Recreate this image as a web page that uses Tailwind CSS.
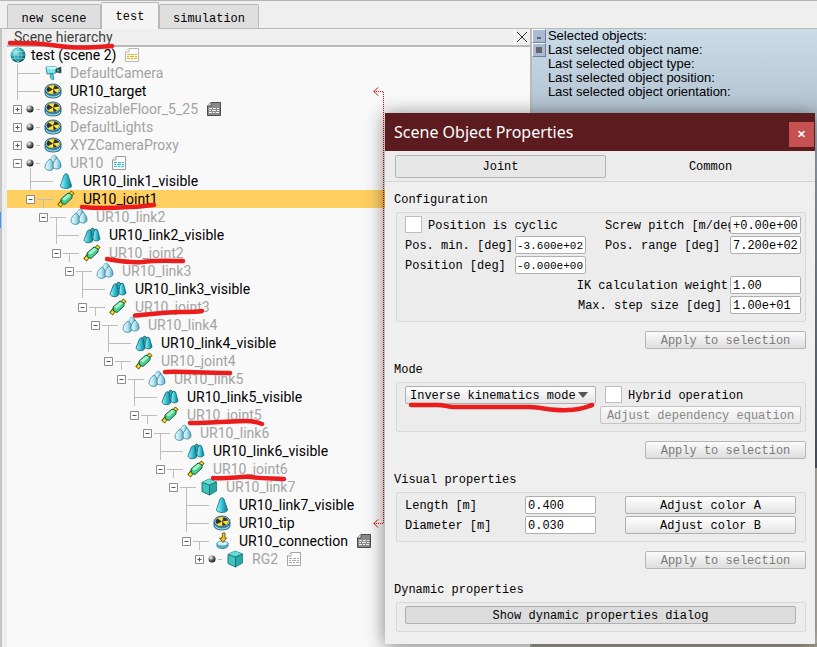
<!DOCTYPE html>
<html lang="en">
<head>
<meta charset="utf-8">
<title>Scene editor</title>
<script src="https://cdn.jsdelivr.net/npm/@tailwindcss/browser@4"></script>
</head>
<body class="bg-[#efefef] font-['Roboto','Liberation_Sans',sans-serif] text-sm text-black">
<svg class="absolute h-0 w-0" aria-hidden="true">
  <defs>
    <linearGradient id="teal" x1="0" x2="1"><stop offset="0" stop-color="#b8f4fa"/><stop offset=".4" stop-color="#43cfe0"/><stop offset="1" stop-color="#087c90"/></linearGradient>
    <linearGradient id="pale" x1="0" x2="1"><stop offset="0" stop-color="#e9fbff"/><stop offset=".5" stop-color="#b5e4f2"/><stop offset="1" stop-color="#4f9db4"/></linearGradient>
    <radialGradient id="ball" cx=".35" cy=".3" r=".8"><stop offset="0" stop-color="#c4f6f6"/><stop offset=".45" stop-color="#2b9cab"/><stop offset="1" stop-color="#084855"/></radialGradient>
    <radialGradient id="bead" cx=".35" cy=".3" r=".7"><stop offset="0" stop-color="#fff"/><stop offset=".5" stop-color="#777"/><stop offset="1" stop-color="#111"/></radialGradient>
    <symbol id="globe" viewBox="0 0 18 18"><circle cx="9" cy="9" r="7.500" fill="url(#ball)"/><path d="M2 9H16M3 5.500H15M3 12.500H15M9 2V16M9 2C4 6 4 12 9 16M9 2C14 6 14 12 9 16" fill="none" stroke="#8ce4e8" stroke-width=".6"/></symbol>
    <symbol id="camera" viewBox="0 0 18 18"><path d="M2 3L12 2.500V9L3 10Z" fill="#7fe6ee" stroke="#1d7d88" stroke-width=".8"/><path d="M2 3L4 5H13L12 2.500Z" fill="#c8fafa"/><path d="M12 5L17 3V9L12 8Z" fill="#2c555c" stroke="#163c42" stroke-width=".6"/><path d="M14 5.500V7.500" stroke="#9ff"/><path d="M6 10H9L10 15L8.500 16L6.500 14Z" fill="#5bd0da" stroke="#1d7d88" stroke-width=".7"/></symbol>
    <symbol id="dummy" viewBox="0 0 18 18"><path d="M1 8V11.500C1 17.500 17 17.500 17 11.500V8Z" fill="#3d9bbf" stroke="#184e66" stroke-width=".8"/><path d="M2 12C4 16 14 16 16 12" fill="none" stroke="#a3e1f3"/><ellipse cx="9" cy="7.500" rx="8" ry="5.500" fill="#7fb4c6" stroke="#264b5b" stroke-width=".8"/><ellipse cx="9" cy="7.500" rx="6.300" ry="4.200" fill="#33332a"/><path d="M9 7.500L4.500 4.500C6 3.300 8 3 10.500 3.300ZM9 7.500L15.300 6.500C15.400 8.500 14.500 10 13 10.700ZM9 7.500L9.500 11.700C7 12 5 11.300 3.800 10.200Z" fill="#ffe32e"/></symbol>
    <symbol id="pair" viewBox="0 0 18 18"><path d="M7 6C7 2 10 0 12 2C14 4 13 6 13 9H8Z" fill="url(#pale)" stroke="#5b9fb1" stroke-width=".8"/><path d="M6 5C9 7 10 10 10 13C10 17.500 1 17.500 1 13C1 10 3 7 6 5Z" fill="url(#pale)" stroke="#3c8498" stroke-width=".8"/><path d="M13 4C16 7 17 9 17 12C17 16 9 16 9 12C9 9 10 7 13 4Z" fill="url(#pale)" stroke="#3c8498" stroke-width=".8"/></symbol>
    <symbol id="cones" viewBox="0 0 18 18"><path d="M8 3L10 2L12 4V9H7Z" fill="#36a6b3" stroke="#0a5f70" stroke-width=".8"/><path d="M6 3.500L8 5L10 14C9 17.500 2 17.500 1 14L4.500 5Z" fill="url(#teal)" stroke="#0a5f70" stroke-width=".8"/><path d="M12.500 3L14.500 4L17 13C16 15.500 11 15.500 10 13L10.500 6Z" fill="url(#teal)" stroke="#0a5f70" stroke-width=".8"/></symbol>
    <symbol id="cone" viewBox="0 0 18 18"><path d="M9 1.500L11 3C12 7 14 11 14.500 14C14 17.300 4 17.300 3.500 14C4 11 6 7 7 3Z" fill="url(#teal)" stroke="#126a7c" stroke-width=".8"/></symbol>
    <symbol id="joint" viewBox="0 0 18 18"><path d="M2 16L6 11M12 6L16 2" stroke="#5f5200" stroke-width="4.500"/><path d="M2.500 15.500L6 11.500M12 6L15.500 2.500" stroke="#f6d81f" stroke-width="2.800"/><path d="M4 9L11 3L15 5V8L8 14.500L4.500 13Z" fill="#49cf93" stroke="#165b3c"/><path d="M5 9L11 4L14 5L8 10.500Z" fill="#a4f5c5"/></symbol>
    <symbol id="cube" viewBox="0 0 18 18"><path d="M9 1L16.500 4V13L9.500 17L2 13.500V4.500Z" fill="#3fc4bf" stroke="#176a6b" stroke-width=".9"/><path d="M9 1L16.500 4L9.500 7L2 4.500Z" fill="#62dcd5"/><path d="M9.500 7L16.500 4V13L9.500 17Z" fill="#2aa7a4"/><path d="M2 4.500L9.500 7V17M9.500 7L16.500 4" fill="none" stroke="#176a6b" stroke-width=".9"/></symbol>
    <symbol id="force" viewBox="0 0 18 18"><path d="M4 11V14C4 17 14 17.500 15 14V11Z" fill="#59bad2" stroke="#2a6e87" stroke-width=".8"/><ellipse cx="9.500" cy="11.500" rx="5.500" ry="2.500" fill="#c6f2fb" stroke="#3e899d" stroke-width=".7"/><path d="M9.500 1H12V6H13.500L10 10.500L6.500 6H9Z" fill="#f7b91b" stroke="#5e430b" stroke-width=".8"/></symbol>
    <symbol id="doc" viewBox="0 0 14 14"><path d="M4 .5H13.500V13.500H.5V4Z" fill="var(--paper)" stroke="var(--edge)"/><path d="M4 .5V4H.5" fill="#fff" stroke="var(--edge)"/><path d="M2 6.500H5M6 6.500H9M10 6.500H12M2 8.500H4M5 8.500H9M10 8.500H12M2 10.500H5M6 10.500H8M9 10.500H12" stroke="var(--ink)" stroke-width="1.200"/></symbol>
  </defs>
</svg>

<div class="relative flex h-screen flex-col overflow-hidden border-t border-[#b4b4b4]">
  <nav class="flex h-7 shrink-0 items-end border-b border-[#b9b9b9] pl-[7px] font-['Liberation_Mono',monospace] text-xs">
    <button class="h-6 w-[94px] rounded-t-xs border border-b-0 border-[#b9b9b9] bg-[#dfdfdf] pt-1">new scene</button>
    <button class="relative z-10 -mb-px h-[27px] w-[58px] rounded-t-xs border border-b-0 border-[#b9b9b9] bg-[#f4f4f4] pt-[2px]">test</button>
    <button class="h-6 w-[100px] rounded-t-xs border border-b-0 border-[#b9b9b9] bg-[#dfdfdf] pt-1">simulation</button>
  </nav>

  <main class="flex min-h-0 flex-1">
    <div class="flex w-[7px] shrink-0 flex-col border-r-[5px] border-[#ededed] bg-[#c4c4c4] pt-[183px]"><div class="h-4 w-px bg-[#3399ff]"></div></div>
    <section class="flex w-[64%] flex-col bg-[#f9f9f9]" aria-label="Scene hierarchy">
      <header class="flex h-[18px] items-center justify-between border-b-2 border-[#b9b9b9] bg-[#efefef] pl-[7px] text-[#404040]">
        <h2>Scene hierarchy</h2>
        <button class="flex h-full w-4 items-center justify-center border-l border-white" aria-label="Close hierarchy"><svg width="10" height="10" viewBox="0 0 10 10" stroke="#333"><path d="M0 0L10 10M10 0L0 10"/></svg></button>
      </header>
      <ul id="tree" class="-mt-px flex flex-col"></ul>
    </section>
    <section class="relative flex flex-1 items-start border-l-2 border-[#b9b9b9] bg-linear-to-b from-[#cbdce9] from-0% via-[#566171] via-71% to-[#c8c3b4] to-71%" aria-label="Scene view">
      <div class="flex flex-col">
        <button class="flex h-[14px] w-[14px] items-end justify-center border border-[#6f7f9f] border-t-white border-l-white bg-[#a9b9d8] pb-[3px]" aria-label="Collapse"><span class="h-[2px] w-1 bg-[#666]"></span></button>
        <button class="flex h-[14px] w-[14px] items-center justify-center border border-[#6f7f9f] border-t-white border-l-white bg-[#a9b9d8]" aria-label="Expand"><span class="h-1.5 w-1.5 bg-[#666]"></span></button>
      </div>
      <div class="pl-[2px] font-['Liberation_Sans',sans-serif] text-[13px] leading-[14px] whitespace-nowrap">
        <p>Selected objects:</p><p>Last selected object name:</p><p>Last selected object type:</p><p>Last selected object position:</p><p>Last selected object orientation:</p>
      </div>
      <div class="absolute inset-x-0 bottom-0 h-1 bg-[#aaa597]"></div>
    </section>
  </main>

  <svg class="pointer-events-none absolute top-[84px] left-[373px]" width="12" height="446" viewBox="0 0 12 446" fill="none" stroke="#e80000" aria-hidden="true"><path d="M5 2.500L1 6.500L5 10.500M5 434.500L1 438.500L5 442.500"/><path d="M1 6.500H10M10.500 7V438M1 438.500H10" stroke-dasharray="1 1"/></svg>

  <div role="dialog" aria-labelledby="dlg" class="absolute top-[112px] right-[2px] left-[385px] bg-[#efefef] pb-3 font-['Liberation_Mono',monospace] text-xs shadow-[0_2px_18px_rgba(0,0,0,0.5)]">
    <header class="flex h-[38px] items-center justify-between bg-[#5c1b1e] pr-px pl-[9px]">
      <h1 id="dlg" class="font-['Noto_Sans',sans-serif] text-base text-white">Scene Object Properties</h1>
      <button class="mt-1 flex h-[25px] w-[25px] items-center justify-center bg-[#c75050]" aria-label="Close"><svg width="7" height="6" viewBox="0 0 7 6" stroke="#fff" stroke-width="1.600"><path d="M.5 0L6.500 6M6.500 0L.5 6"/></svg></button>
    </header>
    <div class="flex h-[31px] items-center border-b border-[#d4d4d4] bg-[#ececec] pl-[10px]">
      <button class="h-[23px] flex-1 rounded-xs border border-[#b3b3b3] bg-[#e7e7e7] pt-px">Joint</button>
      <button class="h-[23px] flex-1 pt-px">Common</button>
    </div>
    <div class="flex flex-col pt-[7px] pr-[9px] pl-[11px]">
      <h3 class="-ml-[2px] h-[23px] leading-[22px]">Configuration</h3>
      <div class="grid h-[110px] auto-rows-[20px] grid-cols-[110px_90px_1fr_71px] rounded-xs border border-[#d8d8d8] bg-[#ececec] pt-[3px] pr-1 pl-2 leading-5 whitespace-nowrap">
        <label class="col-span-2 flex gap-[6px]"><input type="checkbox" class="h-[17px] w-[17px] appearance-none border border-[#bdbdbd] bg-white">Position is cyclic</label>
        <label for="pitch" class="overflow-hidden">Screw pitch [m/deg]</label><input id="pitch" value="+0.00e+00" class="h-[18px] w-full rounded-xs border border-[#b0b0b0] bg-white pt-px pl-[2px]">
        <label for="pmin">Pos. min. [deg]</label><input id="pmin" value="-3.600e+02" class="h-[18px] w-[71px] rounded-xs border border-[#b0b0b0] bg-white pt-px pl-px text-[11px]">
        <label for="range">Pos. range [deg]</label><input id="range" value="7.200e+02" class="h-[18px] w-full rounded-xs border border-[#b0b0b0] bg-white pt-px pl-[2px]">
        <label for="pos">Position [deg]</label><input id="pos" value="-0.000e+00" class="h-[18px] w-[71px] rounded-xs border border-[#b0b0b0] bg-white pt-px pl-px text-[11px]">
        <label for="ik" class="col-span-3 col-start-1 row-start-4 pr-[2px] text-right">IK calculation weight</label><input id="ik" value="1.00" class="row-start-4 h-[18px] w-full rounded-xs border border-[#b0b0b0] bg-white pt-px pl-[2px]">
        <label for="step" class="col-span-3 pr-[8px] text-right">Max. step size [deg]</label><input id="step" value="1.00e+01" class="h-[18px] w-full rounded-xs border border-[#b0b0b0] bg-white pt-px pl-[2px]">
      </div>
      <button disabled class="mt-[9px] h-[18px] w-[161px] self-end rounded-xs border border-[#b5b5b5] bg-linear-to-b from-[#fbfbfb] to-[#dedede] leading-[18px] text-[#7b7b7b]">Apply to selection</button>

      <h3 class="mt-[10px] -ml-[2px] h-[23px] leading-[22px]">Mode</h3>
      <div class="flex h-[50px] items-start justify-between rounded-xs border border-[#d8d8d8] bg-[#ececec] pt-[3px] pr-1 pl-2 leading-5 whitespace-nowrap">
        <div class="relative w-[191px]">
          <select aria-label="Joint mode" class="block h-[18px] w-full appearance-none rounded-xs border border-[#b0b0b0] bg-linear-to-b from-white to-[#e4e4e4] pt-px pl-1 leading-4"><option>Inverse kinematics mode</option></select>
          <svg class="pointer-events-none absolute top-[6px] right-2" width="10" height="6" viewBox="0 0 10 6" fill="#555"><path d="M0 0H10L5 6Z"/></svg>
        </div>
        <div class="flex w-[201px] flex-col gap-[2px]">
          <label class="flex h-[18px] gap-[6px] pl-[5px]"><input type="checkbox" class="h-[17px] w-[17px] appearance-none border border-[#bdbdbd] bg-white">Hybrid operation</label>
          <button disabled class="h-[18px] rounded-xs border border-[#c4c4c4] bg-linear-to-b from-[#fbfbfb] to-[#e9e9e9] leading-[18px] text-[#868686]">Adjust dependency equation</button>
        </div>
      </div>
      <button disabled class="mt-[9px] h-[18px] w-[161px] self-end rounded-xs border border-[#b5b5b5] bg-linear-to-b from-[#fbfbfb] to-[#dedede] leading-[18px] text-[#7b7b7b]">Apply to selection</button>

      <h3 class="mt-[10px] -ml-[2px] h-[23px] leading-[22px]">Visual properties</h3>
      <div class="grid h-[50px] auto-rows-[20px] grid-cols-[120px_100px_1fr] rounded-xs border border-[#d8d8d8] bg-[#ececec] pt-[3px] pr-[9px] pl-2 leading-5">
        <label for="len">Length [m]</label><input id="len" value="0.400" class="h-[18px] w-[71px] rounded-xs border border-[#b0b0b0] bg-white pt-px pl-[2px]"><button class="h-[18px] rounded-xs border border-[#b0b0b0] bg-linear-to-b from-white to-[#e4e4e4] leading-[18px]">Adjust color A</button>
        <label for="dia">Diameter [m]</label><input id="dia" value="0.030" class="h-[18px] w-[71px] rounded-xs border border-[#b0b0b0] bg-white pt-px pl-[2px]"><button class="h-[18px] rounded-xs border border-[#b0b0b0] bg-linear-to-b from-white to-[#e4e4e4] leading-[18px]">Adjust color B</button>
      </div>
      <button disabled class="mt-[9px] h-[18px] w-[161px] self-end rounded-xs border border-[#b5b5b5] bg-linear-to-b from-[#fbfbfb] to-[#dedede] leading-[18px] text-[#7b7b7b]">Apply to selection</button>

      <h3 class="mt-[10px] -ml-[2px] h-[23px] leading-[22px]">Dynamic properties</h3>
      <div class="flex h-[30px] items-start rounded-xs border border-[#d8d8d8] bg-[#ececec] pt-[3px] pr-[9px] pl-2">
        <button class="h-[18px] w-full rounded-xs border border-[#b0b0b0] bg-[#dcdcdc] leading-[18px]">Show dynamic properties dialog</button>
      </div>
    </div>
  </div>

  <svg class="pointer-events-none absolute -top-px left-0" width="817" height="647" viewBox="0 0 817 647" fill="none" stroke="#ea1c1c" stroke-width="4.500" stroke-linecap="round" stroke-linejoin="round" aria-hidden="true">
    <path d="M10 43L35 43.500C50 44 60 47 75 47.500C90 48 100 47 112 46"/>
    <path d="M82 207C100 209 115 208 130 207C142 207 148 205 154 205"/>
    <path d="M107 259C120 261 128 263 142 262C158 260 170 261 183 261"/>
    <path d="M135 315.500C155 314 165 312 180 312C190 312 197 312 202 311"/>
    <path d="M165 372C180 371 200 373 230 373"/>
    <path d="M190 423C210 423 235 421 245 421C252 421 257 422 262 424"/>
    <path d="M213 478C230 479 240 476 250 477C265 479 275 478 284 479"/>
    <path d="M411 405H437C445 405 448 407 453 407H530C545 408 555 411 568 410C580 410 586 407 592 405"/>
  </svg>
</div>

<script>
  // [depth, kind, icon, label, dimmed, note]
  // kind: root | leaf | closed | open (model with bead) | branch
  const rows = [
    [0, 'root', 'globe', 'test (scene 2)', 0, 'orange'],
    [0, 'leaf', 'camera', 'DefaultCamera', 1],
    [0, 'leaf', 'dummy', 'UR10_target', 0],
    [0, 'closed', 'dummy', 'ResizableFloor_5_25', 1, 'dark'],
    [0, 'closed', 'dummy', 'DefaultLights', 1],
    [0, 'closed', 'dummy', 'XYZCameraProxy', 1],
    [0, 'open', 'pair', 'UR10', 1, 'cyan'],
    [1, 'leaf', 'cone', 'UR10_link1_visible', 0],
    [1, 'branch', 'joint', 'UR10_joint1', 0]
  ];
  for (let n = 2; n <= 6; n++) {
    rows.push([2 * n - 2, 'branch', 'pair', `UR10_link${n}`, 1],
              [2 * n - 1, 'leaf', 'cones', `UR10_link${n}_visible`, 0],
              [2 * n - 1, 'branch', 'joint', `UR10_joint${n}`, 1]);
  }
  rows.push([12, 'branch', 'cube', 'UR10_link7', 1],
            [13, 'leaf', 'cone', 'UR10_link7_visible', 0],
            [13, 'leaf', 'dummy', 'UR10_tip', 0],
            [13, 'branch', 'force', 'UR10_connection', 0, 'dark'],
            [14, 'closed', 'cube', 'RG2', 1, 'light']);
  const notes = {
    orange: '--paper:#fff;--edge:#b9b9b9;--ink:#f5a800',
    dark: '--paper:#8b8b8b;--edge:#4c4c4c;--ink:#eee',
    cyan: '--paper:#fff;--edge:#999;--ink:#18c9d2',
    light: '--paper:#fff;--edge:#a5a5a5;--ink:#aaa'
  };
  document.getElementById('tree').innerHTML = rows.map(([d, kind, icon, label, dim, note]) => {
    let lead = '';
    if (kind === 'leaf') {
      lead = '<svg width="31" height="18" fill="none" stroke="#bdbdbd"><path d="M4.500 0V18M4.500 9.500H27"/></svg>';
    } else if (kind !== 'root') {
      const plus = kind === 'closed' ? 'M4.500 2.500V6.500' : '';
      lead = `<button aria-label="Toggle ${label}"><svg width="9" height="9" fill="#fff" stroke="#8c8c8c"><path d="M.5 .5H8.500V8.500H.5Z"/><path d="M2.500 4.500H6.500${plus}" stroke="#555"/></svg></button>`;
      lead += kind === 'branch'
        ? '<svg width="22" height="18" fill="none" stroke="#bdbdbd"><path d="M2 9.500H18M8.500 9.500V18"/></svg>'
        : `<svg width="22" height="18"><circle cx="8" cy="9" r="3.500" fill="url(#bead)"/><path d="M14 9.500H18${kind === 'open' ? 'M8.500 14V18' : ''}" stroke="#bdbdbd"/></svg>`;
    }
    const tone = dim ? 'text-[#a3a3a3]' : 'text-black';
    const row = label === 'UR10_joint1' ? 'bg-[#ffcf62]' : '';
    const gap = kind === 'root' ? 'pl-1' : 'pl-2';
    return `<li class="flex h-[18px] items-center whitespace-nowrap ${row}" style="padding-left:${kind === 'root' ? 2 : 6 + 13 * d}px">${lead}`
      + `<svg width="18" height="18"><use href="#${icon}"/></svg><span class="${gap} ${tone} leading-[18px]">${label}</span>`
      + (note ? `<svg class="ml-[9px]" width="14" height="14" style="${notes[note]}"><use href="#doc"/></svg>` : '') + '</li>';
  }).join('');
</script>
</body>
</html>
